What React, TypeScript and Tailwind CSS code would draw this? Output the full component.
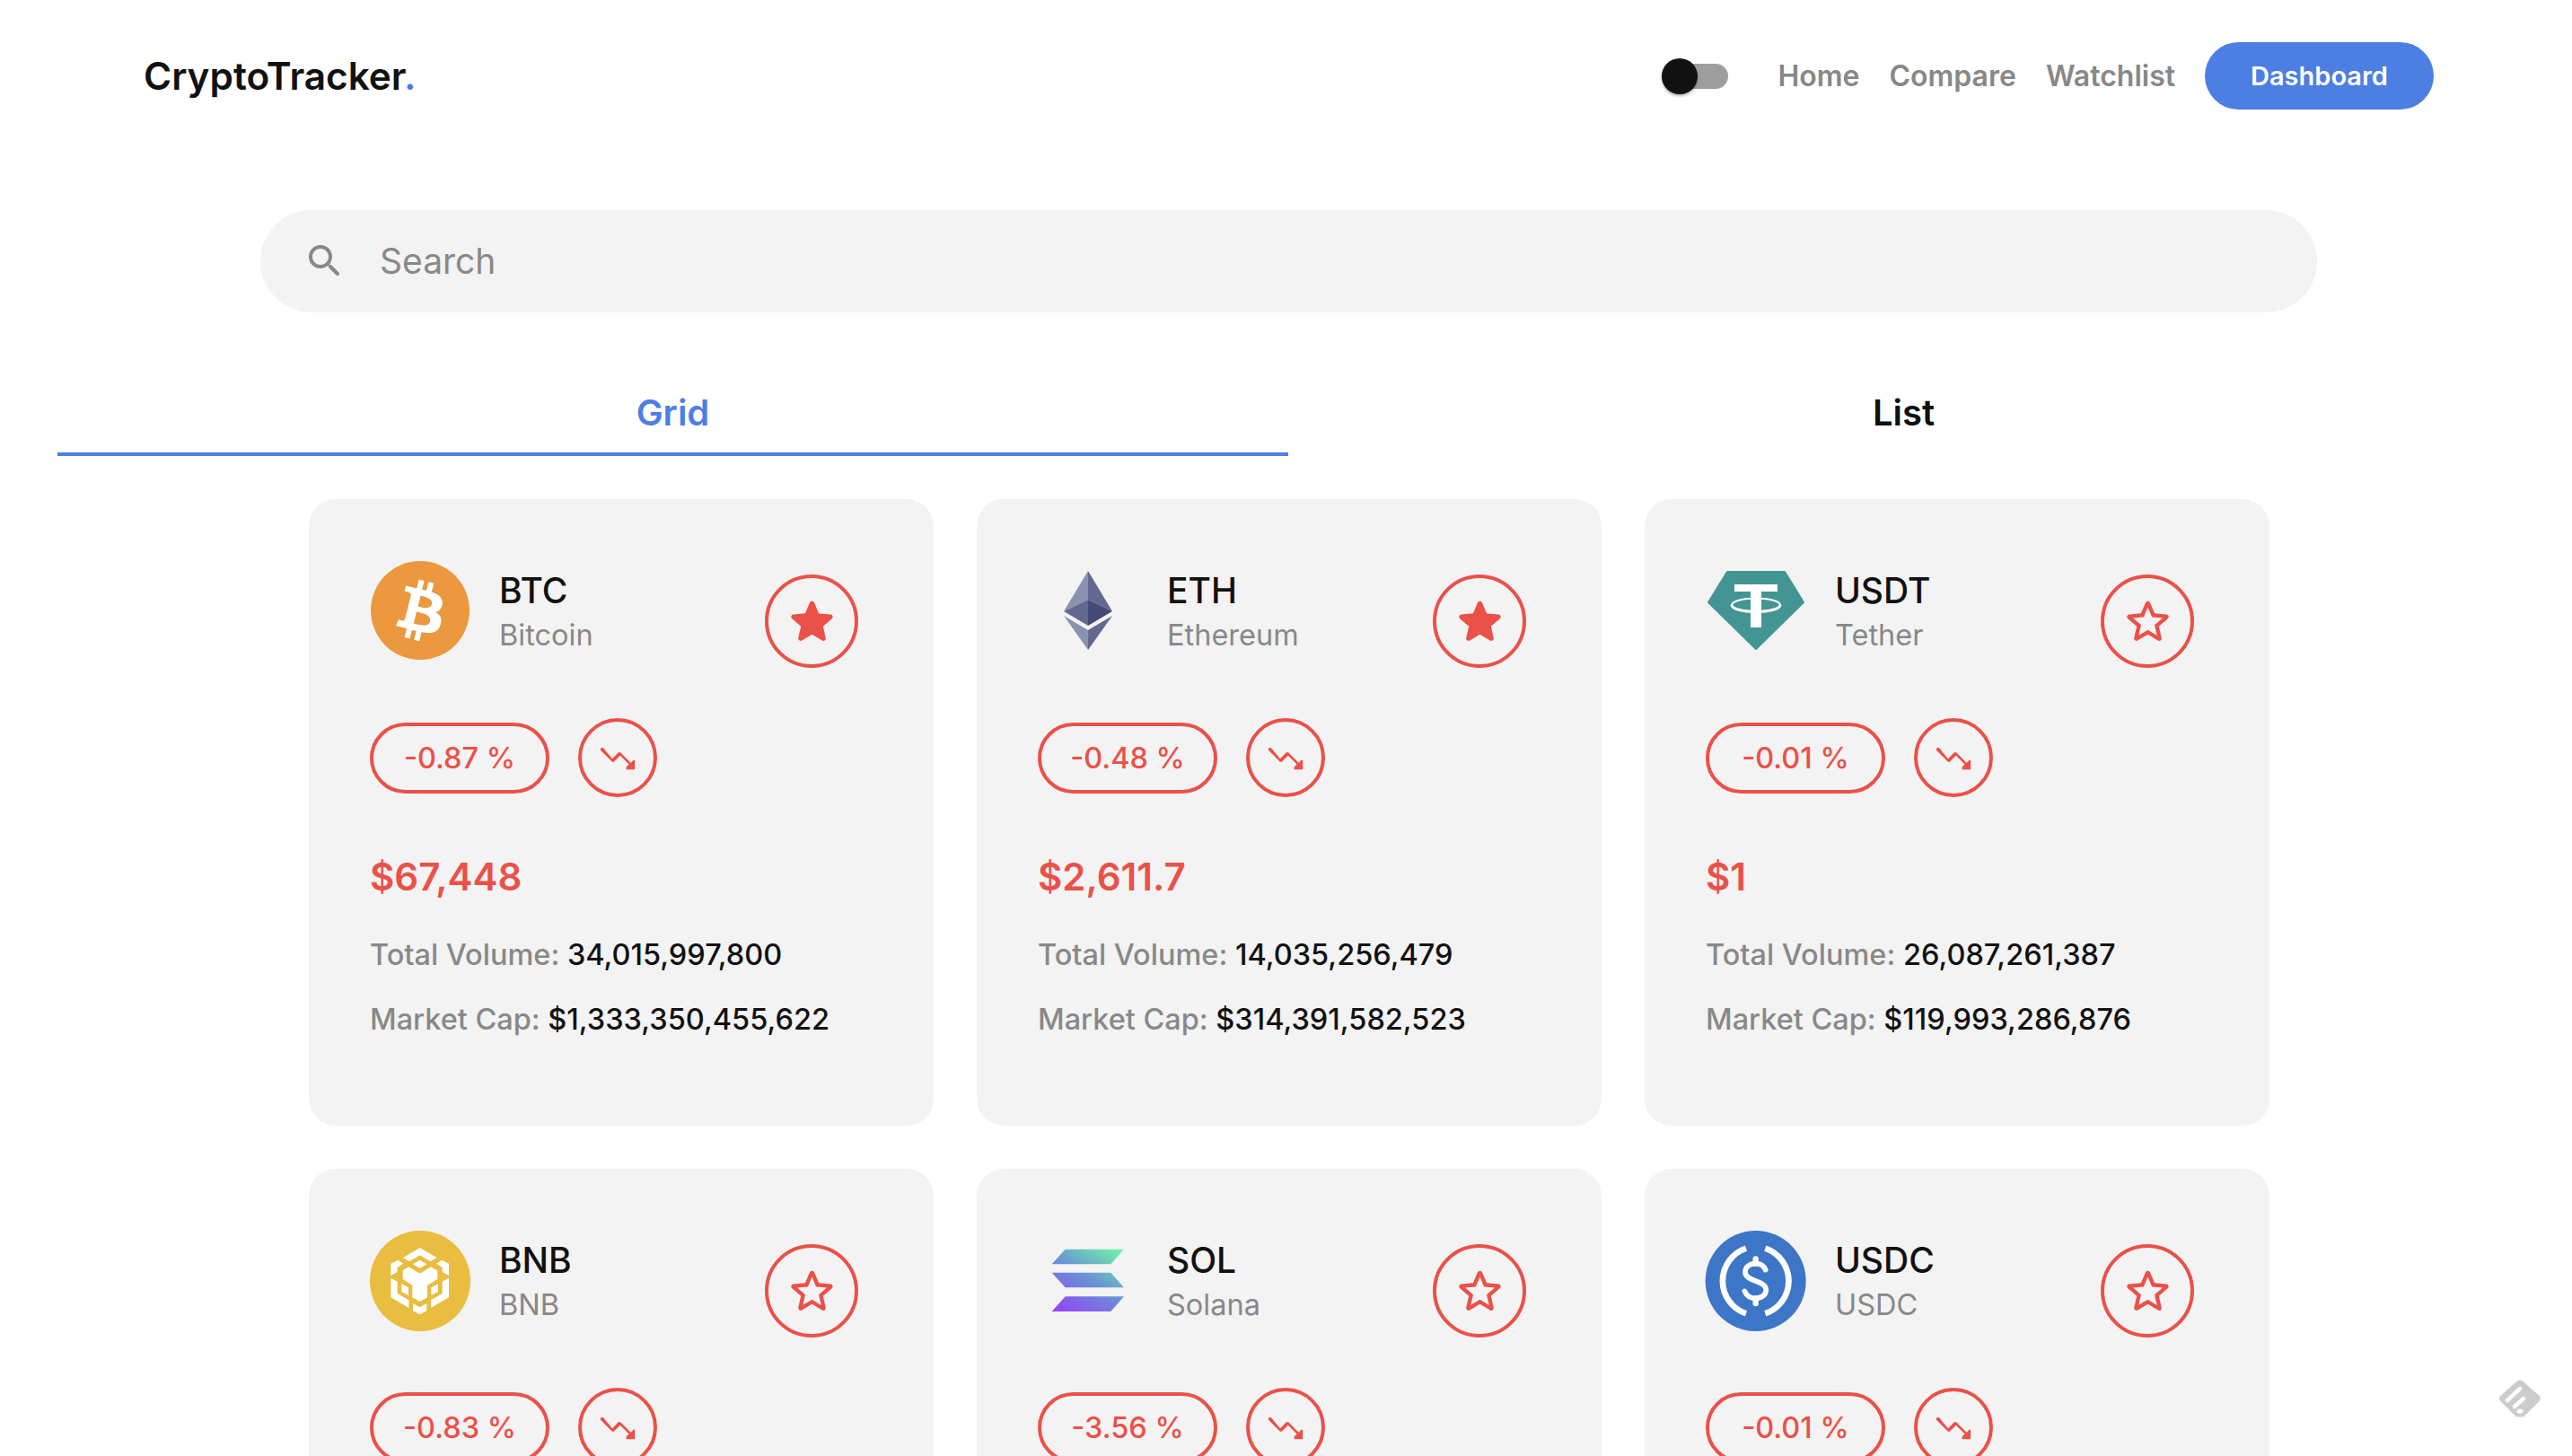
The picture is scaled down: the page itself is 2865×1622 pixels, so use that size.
import React from "react";

const RED = "#ea5149";
const StarFilled = "M12 17.27l4.15 2.51c.76.46 1.69-.22 1.49-1.08l-1.1-4.72 3.67-3.18c.67-.58.31-1.68-.57-1.75l-4.83-.41-1.89-4.46c-.34-.81-1.5-.81-1.84 0L9.19 8.63l-4.83.41c-.88.07-1.24 1.17-.57 1.75l3.67 3.18-1.1 4.72c-.2.86.73 1.54 1.49 1.08l4.15-2.5z";
const StarOutline = "M19.65 9.04l-4.84-.42-1.89-4.45c-.34-.81-1.5-.81-1.84 0L9.19 8.63l-4.83.41c-.88.07-1.24 1.17-.57 1.75l3.67 3.18-1.1 4.72c-.2.86.73 1.54 1.49 1.08l4.15-2.5 4.15 2.51c.76.46 1.69-.22 1.49-1.08l-1.1-4.73 3.67-3.18c.67-.58.32-1.68-.56-1.75zM12 15.4l-3.76 2.27 1-4.28-3.32-2.88 4.38-.38L12 6.1l1.71 4.04 4.38.38-3.32 2.88 1 4.28L12 15.4z";
const Trend = "m16.85 17.15 1.44-1.44-4.88-4.88-3.29 3.29c-.39.39-1.02.39-1.41 0l-6-6.01c-.39-.39-.39-1.02 0-1.41.39-.39 1.02-.39 1.41 0L9 12.59l3.29-3.29c.39-.39 1.02-.39 1.41 0l5.59 5.58 1.44-1.44c.31-.31.85-.09.85.35v4.29c0 .28-.22.5-.5.5H17.2c-.44.01-.66-.53-.35-.84z";

const Logo = ({ id }: { id: string }) => {
  const p = { viewBox: "0 0 110 110", className: "w-[110px] h-[110px] overflow-visible" };
  if (id === "btc")
    return (
      <svg {...p}>
        <circle cx="55" cy="55" r="55" fill="#eb983f" />
        <g transform="scale(3.4375)">
          <path fill="#fff" d="M23.189 14.02c.314-2.096-1.283-3.223-3.465-3.975l.708-2.84-1.728-.43-.69 2.765c-.454-.114-.92-.22-1.385-.326l.695-2.783L15.596 6l-.708 2.839c-.376-.086-.746-.17-1.104-.26l.002-.009-2.384-.595-.46 1.846s1.283.294 1.256.312c.7.175.826.638.805 1.006l-.806 3.235c.048.012.11.03.18.057l-.183-.045-1.13 4.532c-.086.212-.303.531-.793.41.018.025-1.256-.313-1.256-.313l-.858 1.978 2.25.561c.418.105.828.215 1.231.318l-.715 2.872 1.727.43.708-2.84c.472.127.93.245 1.378.357l-.706 2.828 1.728.43.715-2.866c2.948.558 5.164.333 6.097-2.333.752-2.146-.037-3.385-1.588-4.192 1.13-.26 1.98-1.003 2.207-2.538zm-3.95 5.538c-.533 2.147-4.148.986-5.32.695l.95-3.805c1.172.293 4.929.872 4.37 3.11zm.535-5.569c-.487 1.953-3.495.96-4.47.717l.86-3.45c.975.243 4.118.696 3.61 2.733z" />
        </g>
      </svg>
    );
  if (id === "eth")
    return (
      <svg {...p}>
        <polygon points="55,11 28,56 55,43" fill="#8a92b2" />
        <polygon points="55,11 82,56 55,43" fill="#62688f" />
        <polygon points="28,56 55,43 55,72" fill="#62688f" />
        <polygon points="82,56 55,43 55,72" fill="#454a75" />
        <polygon points="28,61 55,77 55,99" fill="#8a92b2" />
        <polygon points="82,61 55,77 55,99" fill="#62688f" />
      </svg>
    );
  if (id === "usdt")
    return (
      <svg {...p}>
        <polygon points="23,12 87,12 108,46 55,98 2,46" fill="#439593" stroke="#439593" strokeWidth="2" strokeLinejoin="round" />
        <rect x="31" y="26" width="48" height="8" fill="#fff" />
        <rect x="49" y="30" width="12" height="44" fill="#fff" />
        <ellipse cx="55" cy="49" rx="27" ry="7.5" fill="none" stroke="#fff" strokeWidth="2" />
        <path d="M28 49A27 7.5 0 0 0 82 49" fill="none" stroke="#fff" strokeWidth="3" />
      </svg>
    );
  if (id === "bnb")
    return (
      <svg {...p}>
        <g transform="translate(-23,-20) scale(0.33333)">
          <circle cx="234" cy="228" r="168" fill="#e9bd40" />
          <g fill="#fff">
            <polygon points="233,117 290,150 268,163 233,142 198,163 177,150" />
            <polygon points="233,158 256,172 233,186 210,172" />
            <polygon points="136,170 160,158 178,170 158,183 158,198 136,210" />
            <polygon points="330,170 306,158 288,170 308,183 308,198 330,210" />
            <polygon points="176,193 196,181 233,203 270,181 292,193 292,222 258,242 258,283 233,297 208,283 208,242 176,222" />
            <polygon points="172,238 195,250 195,276 172,264" />
            <polygon points="294,238 271,250 271,276 294,264" />
            <polygon points="136,218 158,230 158,270 196,292 196,318 136,283" />
            <polygon points="330,218 308,230 308,270 270,292 270,318 330,283" />
            <polygon points="210,303 233,316 256,303 256,328 233,340 210,328" />
          </g>
        </g>
      </svg>
    );
  if (id === "sol")
    return (
      <svg {...p}>
        <defs>
          <linearGradient id="solg" gradientUnits="userSpaceOnUse" x1="170" y1="345" x2="320" y2="105">
            <stop offset="0" stopColor="#9345f8" />
            <stop offset="0.5" stopColor="#6a8fd6" />
            <stop offset="1" stopColor="#6ff3a6" />
          </linearGradient>
        </defs>
        <g transform="translate(-27,-20) scale(0.33333)" fill="url(#solg)">
          <polygon points="170,122 366,122 322,172 125,172" />
          <polygon points="125,200 322,200 366,250 170,250" />
          <polygon points="170,280 366,280 322,330 125,330" />
        </g>
      </svg>
    );
  return (
    <svg {...p}>
      <g transform="translate(-31,-20) scale(0.33333)">
        <circle cx="257" cy="228" r="168" fill="#3d76c6" />
        <g fill="none" stroke="#fff" strokeWidth="20">
          <path d="M225 119A115 115 0 0 0 225 337" />
          <path d="M289 119A115 115 0 0 1 289 337" />
          <path strokeWidth="17" strokeLinecap="round" d="M290 191C284 176 272 170 257 170C235 170 222 183 222 198C222 215 240 222 257 228C275 234 292 242 292 258C292 273 278 286 257 286C240 286 228 280 220 262" />
          <path strokeWidth="19" strokeLinecap="round" d="M257 154V170M257 286V303" />
        </g>
      </g>
    </svg>
  );
};

type Coin = { id: string; sym: string; name: string; fav: boolean; pct: string; price?: string; vol?: string; cap?: string };
const coins: Coin[] = [
  { id: "btc", sym: "BTC", name: "Bitcoin", fav: true, pct: "-0.87 %", price: "$67,448", vol: "34,015,997,800", cap: "$1,333,350,455,622" },
  { id: "eth", sym: "ETH", name: "Ethereum", fav: true, pct: "-0.48 %", price: "$2,611.7", vol: "14,035,256,479", cap: "$314,391,582,523" },
  { id: "usdt", sym: "USDT", name: "Tether", fav: false, pct: "-0.01 %", price: "$1", vol: "26,087,261,387", cap: "$119,993,286,876" },
  { id: "bnb", sym: "BNB", name: "BNB", fav: false, pct: "-0.83 %" },
  { id: "sol", sym: "SOL", name: "Solana", fav: false, pct: "-3.56 %" },
  { id: "usdc", sym: "USDC", name: "USDC", fav: false, pct: "-0.01 %" },
];

const Card = ({ c }: { c: Coin }) => (
  <div className="h-[698px] rounded-[30px] bg-[#f3f3f3] pt-[69px] pl-[68px] pr-[84px]">
    <div className="flex items-start justify-between h-[119px]">
      <div className="flex items-center gap-[33px] ml-[1px]">
        <div className="w-[110px] h-[110px] shrink-0"><Logo id={c.id} /></div>
        <div className="flex flex-col pt-[6px]">
          <div className="text-[39px] leading-[50px] font-medium text-[#111]">{c.sym}</div>
          <div className="text-[32.5px] leading-[50px] font-normal text-[#888]">{c.name}</div>
        </div>
      </div>
      <div className="mt-[15px] w-[104px] h-[104px] rounded-full border-[4px] border-[#ea5149] flex items-center justify-center shrink-0">
        <svg viewBox="0 0 24 24" className="w-[65px] h-[65px]" fill={RED}>
          <path d={c.fav ? StarFilled : StarOutline} />
        </svg>
      </div>
    </div>
    <div className="mt-[56px] flex items-center gap-[32px]">
      <div className="w-[200px] h-[79px] rounded-full border-[4px] border-[#ea5149] flex items-center justify-center pt-[2px] text-[32.5px] font-medium text-[#ea5149]">{c.pct}</div>
      <div className="w-[88px] h-[88px] rounded-full border-[4px] border-[#ea5149] flex items-center justify-center">
        <svg viewBox="0 0 24 24" className="w-[48px] h-[48px]" fill={RED}><path d={Trend} /></svg>
      </div>
    </div>
    {c.price && (
      <>
        <div className="mt-[64px] text-[42px] leading-[50px] font-semibold text-[#ea5149]">{c.price}</div>
        <div className="mt-[42px] text-[32.5px] leading-[40px] font-medium text-[#888] whitespace-nowrap">Total Volume: <span className="text-[#111]">{c.vol}</span></div>
        <div className="mt-[32px] text-[32.5px] leading-[40px] font-medium text-[#888] whitespace-nowrap">Market Cap: <span className="text-[#111]">{c.cap}</span></div>
      </>
    )}
  </div>
);

export default function App() {
  return (
    <div className="relative w-[2865px] h-[1622px] overflow-hidden bg-white font-['Inter',sans-serif]">
      <header className="flex items-center justify-between pt-[47px] pl-[160px] pr-[154px]">
        <h1 className="text-[42.3px] leading-[75px] font-semibold text-[#111]">CryptoTracker<span className="text-[#4d7ee3]">.</span></h1>
        <nav className="flex items-center gap-[33px]">
          <div className="relative w-[74px] h-[40px] mr-[22px]">
            <div className="absolute left-[8px] right-0 top-[6px] h-[28px] rounded-full bg-[#9e9e9e]" />
            <div className="absolute left-0 top-0 w-[40px] h-[40px] rounded-full bg-[#111] shadow-[0_2px_3px_rgba(0,0,0,0.3)]" />
          </div>
          <a className="text-[32px] font-semibold text-[#888]">Home</a>
          <a className="text-[32px] font-semibold text-[#888]">Compare</a>
          <a className="text-[32px] font-semibold text-[#888]">Watchlist</a>
          <button className="w-[255px] h-[75px] rounded-full bg-[#4d7ee3] text-white text-[29px] font-semibold">Dashboard</button>
        </nav>
      </header>

      <div className="mt-[112px] ml-[290px] mr-[284px] h-[114px] rounded-full bg-[#f3f3f3] flex items-center pl-[48px] gap-[37px]">
        <svg viewBox="0 0 24 24" className="w-[48px] h-[48px]" fill="#888">
          <path d="M15.5 14h-.79l-.28-.27c1.2-1.4 1.82-3.31 1.48-5.34-.47-2.78-2.79-5-5.59-5.34-4.23-.52-7.79 3.04-7.27 7.27.34 2.8 2.56 5.12 5.34 5.59 2.03.34 3.94-.28 5.34-1.48l.27.28v.79l4.25 4.25c.41.41 1.08.41 1.49 0 .41-.41.41-1.08 0-1.49L15.5 14zm-6 0C7.01 14 5 11.99 5 9.5S7.01 5 9.5 5 14 7.01 14 9.5 11.99 14 9.5 14z" />
        </svg>
        <span className="text-[39px] text-[#888]">Search</span>
      </div>

      <div className="mt-[67px] ml-[64px] mr-[59px] grid grid-cols-2">
        <div className="h-[93px] border-b-[4px] border-[#4d7ee3] flex items-center justify-center text-[40px] font-semibold text-[#4d7ee3]">Grid</div>
        <div className="h-[93px] flex items-center justify-center pb-[4px] text-[40px] font-semibold text-[#111]">List</div>
      </div>

      <div className="mt-[48px] ml-[344px] mr-[337px] grid grid-cols-3 gap-[48px]">
        {coins.map((c) => <Card key={c.id} c={c} />)}
      </div>

      <svg viewBox="0 0 48 44" className="absolute left-[2783px] top-[1536px] w-[48px] h-[44px]">
        <path d="M24 1.5a5 5 0 0 1 3.5 1.4L45.6 19a4 4 0 0 1 0 6L29.5 41a5 5 0 0 1-3.5 1.4H22a5 5 0 0 1-3.5-1.4L2.4 25a4 4 0 0 1 0-6L20.5 2.9A5 5 0 0 1 24 1.5z" fill="#cccccc" />
        <path d="M10 24L24 11" stroke="#fff" strokeWidth="4.5" strokeLinecap="round" />
        <path d="M18 31L28 22" stroke="#fff" strokeWidth="4.5" strokeLinecap="round" />
        <ellipse cx="24" cy="36" rx="3.5" ry="2.6" fill="#fff" />
      </svg>
    </div>
  );
}
